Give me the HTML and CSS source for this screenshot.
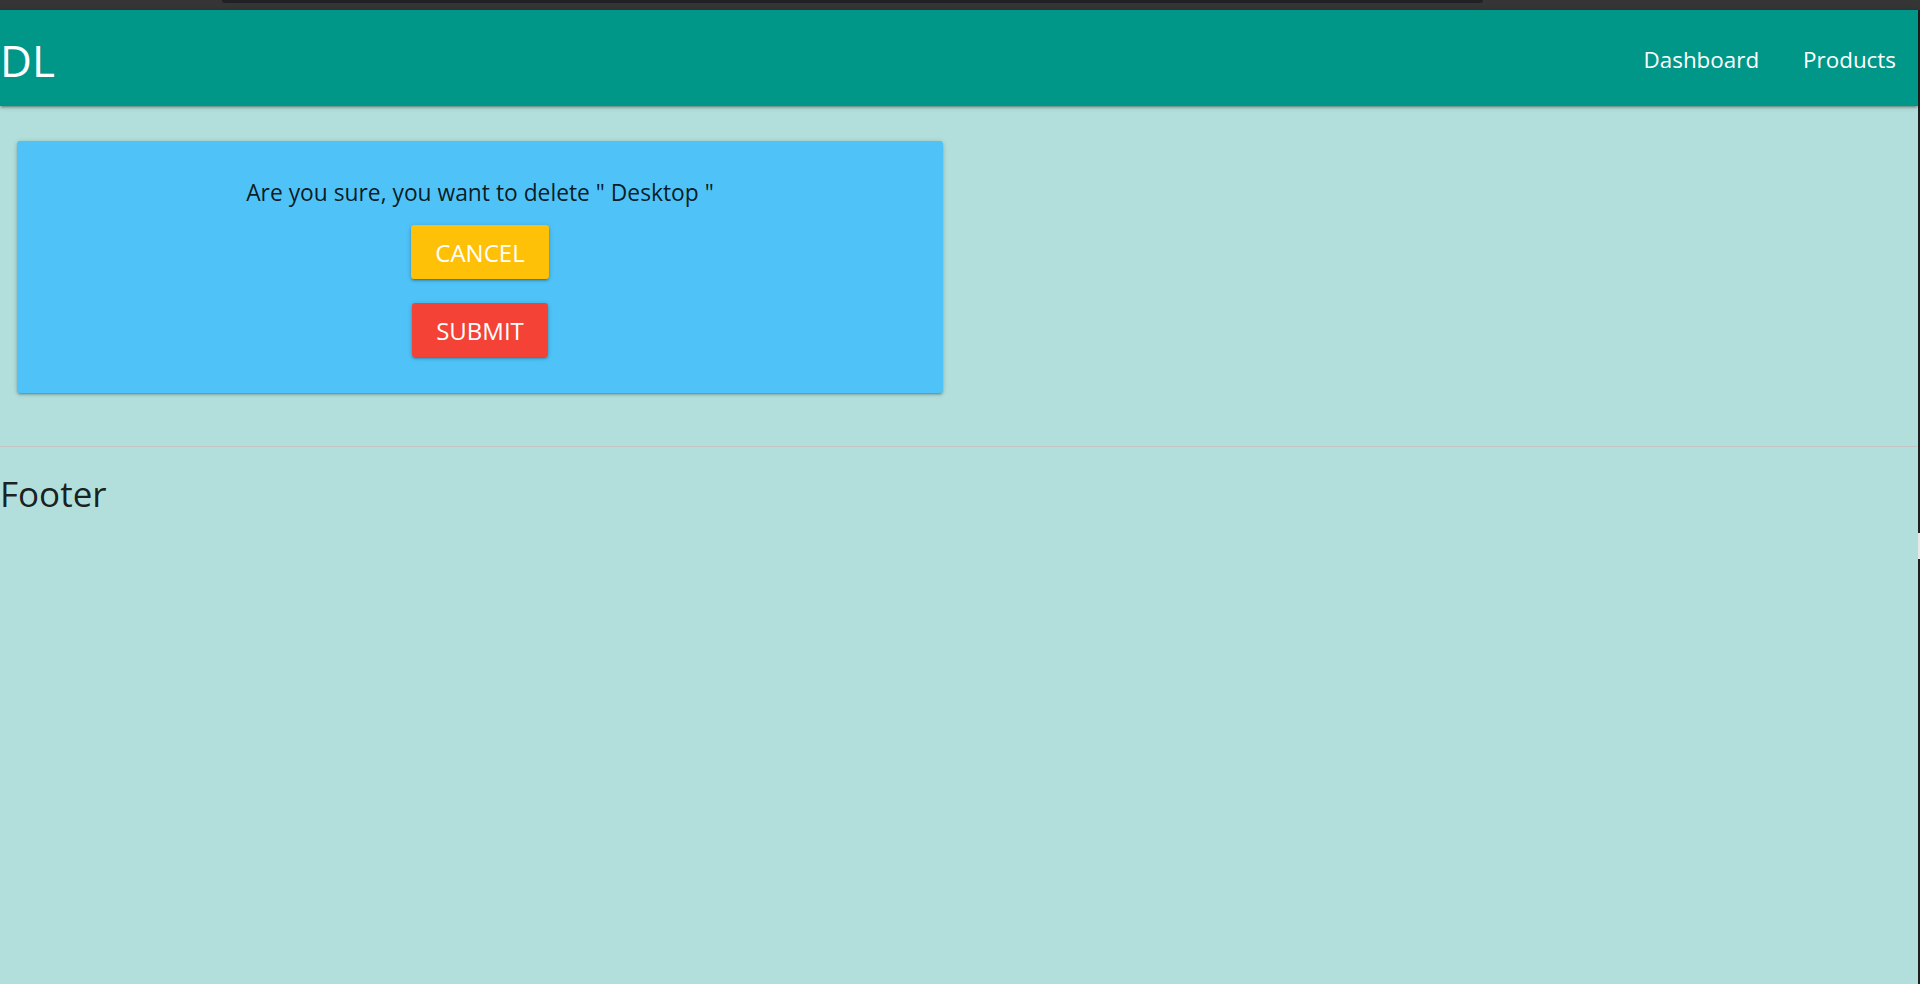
FILE: index.html
```html
<!DOCTYPE html>
<html lang="en">
<head>
<meta charset="utf-8">
<title>DL</title>
<link rel="stylesheet" href="styles.css">
</head>
<body>
<div class="chrome"><div class="chrome-tab"></div></div>
<div class="page">
  <div class="main">
    <nav class="navbar">
      <a class="brand" href="#">DL</a>
      <ul class="nav-links">
        <li><a href="#">Dashboard</a></li>
        <li><a href="#">Products</a></li>
      </ul>
    </nav>
    <section class="content">
      <div class="card">
        <p class="card-text">Are you sure, you want to delete " Desktop "</p>
        <button class="btn btn-cancel">Cancel</button>
        <button class="btn btn-submit">Submit</button>
      </div>
    </section>
    <footer class="footer">
      <h5 class="footer-title">Footer</h5>
    </footer>
  </div>
  <div class="edge"><div class="edge-thumb"></div></div>
</div>
</body>
</html>
```
FILE: styles.css
```css
* { box-sizing: border-box; }
html, body { margin: 0; padding: 0; }
body {
  background: #b2dfdb;
  font-family: "Open Sans", "Noto Sans", sans-serif;
  color: rgba(0,0,0,0.87);
  height: 984px;
  overflow: hidden;
}
.chrome {
  height: 10px;
  background: #353535;
  display: flex;
}
.chrome-tab {
  margin-left: 222px;
  width: 1261px;
  height: 3px;
  background: #202124;
  border-radius: 0 0 8px 8px;
}
.page {
  display: flex;
  height: 974px;
}
.main {
  flex: 1;
  display: flex;
  flex-direction: column;
}
.edge {
  width: 2px;
  background: #1f1f1f;
  display: flex;
  flex-direction: column;
  padding-top: 523px;
}
.edge-thumb {
  height: 26px;
  background: #e8e8e8;
}
.navbar {
  height: 96px;
  padding-top: 4px;
  background: #009688;
  display: flex;
  align-items: center;
  justify-content: space-between;
  box-shadow: 0 2px 2px 0 rgba(0,0,0,0.14), 0 3px 1px -2px rgba(0,0,0,0.12), 0 1px 5px 0 rgba(0,0,0,0.2);
  position: relative;
  z-index: 1;
}
.brand {
  color: #fff;
  text-decoration: none;
  font-size: 44px;
  line-height: 92px;
}
.nav-links {
  list-style: none;
  margin: 0;
  padding: 0;
  display: flex;
}
.nav-links a {
  display: block;
  color: #fff;
  text-decoration: none;
  font-size: 22.4px;
  line-height: 92px;
  padding: 0 22px;
}
.content {
  padding: 35px 0 0 17px;
}
.card {
  width: 926px;
  height: 252px;
  background: #4fc3f7;
  border-radius: 3px;
  box-shadow: 0 2px 2px 0 rgba(0,0,0,0.14), 0 3px 1px -2px rgba(0,0,0,0.12), 0 1px 5px 0 rgba(0,0,0,0.2);
  display: flex;
  flex-direction: column;
  align-items: center;
  padding-top: 35px;
}
.card-text {
  margin: 0 0 16px;
  font-size: 22.8px;
  line-height: 33px;
}
.btn {
  height: 54px;
  border: none;
  border-radius: 3px;
  padding: 0 24px;
  color: #fff;
  font-family: inherit;
  font-size: 24px;
  text-transform: uppercase;
  box-shadow: 0 2px 2px 0 rgba(0,0,0,0.14), 0 3px 1px -2px rgba(0,0,0,0.12), 0 1px 5px 0 rgba(0,0,0,0.2);
}
.btn-cancel { background: #ffc107; margin-bottom: 24px; }
.btn-submit { background: #f44336; }
.footer {
  margin-top: 53px;
  border-top: 1px solid #c4c4c4;
  padding-top: 22px;
}
.footer-title {
  margin: 0;
  font-size: 35px;
  font-weight: 400;
  line-height: 50px;
}
```
